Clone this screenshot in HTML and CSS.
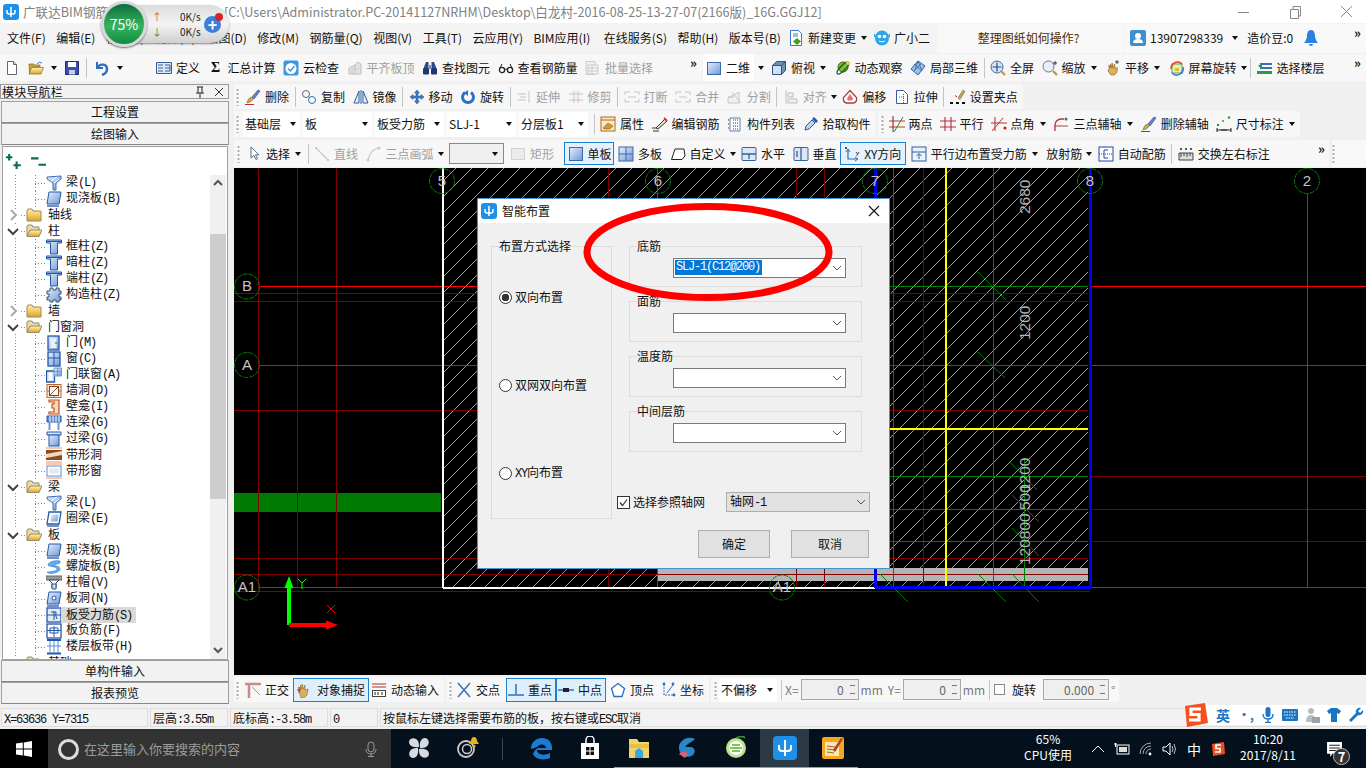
FILE: index.html
```html
<!DOCTYPE html>
<html lang="zh-CN">
<head>
<meta charset="utf-8">
<title>广联达BIM钢筋算量软件</title>
<link rel="stylesheet" href="styles.css">
</head>
<body>
<svg class="sprite" xmlns="http://www.w3.org/2000/svg">
<defs>
<linearGradient id="gb" x1="0" y1="0" x2="1" y2="1"><stop offset="0" stop-color="#e8f0fb"/><stop offset="1" stop-color="#6f97d8"/></linearGradient>
<linearGradient id="gy" x1="0" y1="0" x2="0" y2="1"><stop offset="0" stop-color="#fff2b0"/><stop offset="1" stop-color="#e0a520"/></linearGradient>
<pattern id="hatch" patternUnits="userSpaceOnUse" width="16" height="16"><path d="M-1 17 17 -1" stroke="#c4c4c4" stroke-width=".8"/></pattern>

<symbol id="new" viewBox="0 0 16 16"><path d="M3.5 1.5h6l3 3v10h-9z" fill="#fff" stroke="#666"/><path d="M9.5 1.5v3h3" fill="#ddd" stroke="#666"/></symbol>
<symbol id="open" viewBox="0 0 16 16"><path d="M1 4h5l1 1h5v2H4L1.500 14z" fill="#c9a24a" stroke="#8a6a20" stroke-width=".7"/><path d="M3.500 7.500h12L13 14H1z" fill="url(#gy)" stroke="#8a6a20" stroke-width=".7"/><path d="M9 4q2-3 5-1" fill="none" stroke="#3a7ac8"/></symbol>
<symbol id="save" viewBox="0 0 16 16"><path d="M1.500 1.500h13v13h-13z" fill="#3b4fb0" stroke="#1f2a70"/><path d="M4 2h8v5H4z" fill="#fff"/><path d="M5 10h6v4.500H5z" fill="#c8cce0"/></symbol>
<symbol id="undo" viewBox="0 0 16 16"><path d="M3 2v6h6" fill="none" stroke="#2a6fc0" stroke-width="2"/><path d="M3.500 7.500C6 3 13 4 13 9c0 3-2 5-5 6" fill="none" stroke="#2a6fc0" stroke-width="2.400"/></symbol>
<symbol id="def" viewBox="0 0 16 16"><path d="M.500 2.500h15v11H.500z" fill="#dbe8f8" stroke="#3a5f95"/><path d="M2 5h5M2 8h5M2 11h5M9 5h5v6H9M9 8h5" fill="none" stroke="#3a5f95"/></symbol>
<symbol id="cloud" viewBox="0 0 16 16"><rect x=".5" y=".5" width="15" height="15" rx="2" fill="#3d97e0"/><circle cx="8" cy="8.500" r="5.500" fill="#fff"/><path d="M5 8.500l2.500 2.500 4-5" fill="none" stroke="#3d97e0" stroke-width="1.500"/></symbol>
<symbol id="flush" viewBox="0 0 16 16"><path d="M2 14V8l6-3v9zM8 5l3-3 3 2v10H8" fill="#ddd" stroke="#aaa"/><path d="M5 13V9h7" fill="none" stroke="#bbb"/></symbol>
<symbol id="bino" viewBox="0 0 16 16"><path d="M2 7l2-5h2.500v6H2zM14 7l-2-5H9.500v6H14z" fill="#2b4a8a"/><rect x="1" y="8" width="6" height="6.500" rx="1" fill="#1f3872"/><rect x="9" y="8" width="6" height="6.500" rx="1" fill="#1f3872"/><path d="M7 5h2v4H7z" fill="#7a8eb8"/></symbol>
<symbol id="glass" viewBox="0 0 16 16"><circle cx="4" cy="10" r="2.600" fill="#fff" stroke="#222" stroke-width="1.300"/><circle cx="12" cy="10" r="2.600" fill="#fff" stroke="#222" stroke-width="1.300"/><path d="M6.500 9.500q1.500-1 3 0M1.500 9 4 4M14.500 9 12 4" fill="none" stroke="#222"/></symbol>
<symbol id="batch" viewBox="0 0 16 16"><path d="M1 1.500h9v13H1z" fill="#eee" stroke="#bbb"/><path d="M3 5h10v9H3zM3 8h10M3 11h10M7 5v9" fill="#f4f4f4" stroke="#bbb"/></symbol>
<symbol id="sq" viewBox="0 0 16 16"><rect x="1.500" y="2.500" width="13" height="12" fill="url(#gb)" stroke="#3e66aa"/></symbol>
<symbol id="cube" viewBox="0 0 16 16"><path d="M1.500 5.500h9v9h-9z" fill="#cfe0f5" stroke="#32557f"/><path d="M1.500 5.500l4-4h9l-4 4zM10.500 5.500l4-4v9l-4 4z" fill="#6f8fb8" stroke="#32557f"/></symbol>
<symbol id="orbit" viewBox="0 0 16 16"><circle cx="8" cy="7" r="5" fill="#7fb93a" stroke="#3b6a17"/><ellipse cx="8" cy="8" rx="8" ry="2.500" transform="rotate(-45 8 8)" fill="none" stroke="#1c5c25" stroke-width="1.300"/><circle cx="13" cy="3" r="2" fill="#e8d44a"/></symbol>
<symbol id="local3" viewBox="0 0 16 16"><path d="M8 1l7 5-7 9-7-6z" fill="#9cc0ea" stroke="#2f5f9c"/><path d="M4 4l8 7M8 1l-3 9M12 3l-8 8M8 1l4 10" stroke="#2f5f9c" stroke-width=".8"/></symbol>
<symbol id="full" viewBox="0 0 16 16"><circle cx="7" cy="7" r="6" fill="#d7e4f5" stroke="#4468a0"/><path d="M7 2.500v9M2.500 7h9" stroke="#24508e" stroke-width="1.200"/><path d="M11.500 11.500l3.500 3.500" stroke="#c69a2e" stroke-width="2.200"/></symbol>
<symbol id="zoom" viewBox="0 0 16 16"><circle cx="6.500" cy="6.500" r="5.500" fill="#e8eef8" stroke="#66758f"/><path d="M11 11l4 4" stroke="#c69a2e" stroke-width="2.400"/><path d="M13 1v4M11 3h4" stroke="#335" /></symbol>
<symbol id="hand" viewBox="0 0 16 16"><path d="M4 9V5l1.500 3V4L7 8V3l1.500 5 1-4 .8 5 2-1.500L12 12.500 9 15H6L3 11z" fill="#d9b15c" stroke="#8a6a25" stroke-width=".7"/><path d="M12 0v4M10 2h4" stroke="#345"/></symbol>
<symbol id="scr" viewBox="0 0 16 16"><rect x="3" y="4" width="10" height="9" fill="#dff0b8" stroke="#7a9a40"/><path d="M2 9a6.500 6.500 0 0 1 11-5" fill="none" stroke="#e04030" stroke-width="1.500"/><path d="M14 7a6.500 6.500 0 0 1-11 6" fill="none" stroke="#3080d0" stroke-width="1.500"/><path d="M6 8h4v3H6z" fill="#f2b030"/></symbol>
<symbol id="floor" viewBox="0 0 16 16"><path d="M3 3h12v2H3zM3 7h12v2H3zM3 11h12v2H3z" fill="#3b6fb5"/><path d="M1 6 5 3v6zM0 11h15v3H0z" fill="#2f9a45"/></symbol>
<symbol id="brush" viewBox="0 0 16 16"><path d="M2 14q1-5 4-6l2 2q-1 3-6 4z" fill="#c9b04a" stroke="#776a20" stroke-width=".6"/><path d="M7 8l6-7 2 1-6 8z" fill="#6d7fc8" stroke="#2e3d88" stroke-width=".6"/><path d="M0 15.500h9" stroke="#c23"/></symbol>
<symbol id="copy" viewBox="0 0 16 16"><circle cx="5" cy="5" r="3.500" fill="none" stroke="#667"/><circle cx="11" cy="11" r="3.500" fill="none" stroke="#2a6fc0"/><path d="M7.500 7.500l1 1" stroke="#2a6fc0"/></symbol>
<symbol id="mirror" viewBox="0 0 16 16"><path d="M1 14 6 2v12zM15 14 10 2v12z" fill="#e8f0fb" stroke="#2a5c9c"/><path d="M8 1v14" stroke="#2a5c9c"/></symbol>
<symbol id="move" viewBox="0 0 16 16"><path d="M8 1l2.500 3H9v3h3V5.500L15 8l-3 2.500V9H9v3h1.500L8 15l-2.500-3H7V9H4v1.500L1 8l3-2.500V7h3V4H5.500z" fill="#3f7cc2" stroke="#1f4f8c" stroke-width=".5"/></symbol>
<symbol id="rot" viewBox="0 0 16 16"><path d="M5 3.500a5.500 5.500 0 1 0 6 0" fill="none" stroke="#2a6fc8" stroke-width="3"/><path d="M8 1v6l-4-3z" fill="#2a6fc8"/></symbol>
<symbol id="ext" viewBox="0 0 16 16"><path d="M1 5h9M1 11h9M13 2v12M10 8H4" stroke="#b5b5b5" fill="none"/></symbol>
<symbol id="trim" viewBox="0 0 16 16"><path d="M1 5h14M1 11h14M6 2v12M10 2v12" stroke="#b5b5b5" fill="none"/></symbol>
<symbol id="brk" viewBox="0 0 16 16"><path d="M1 3h5M10 3h5M1 13h5M10 13h5M1 3v3M15 3v3M1 13v-3M15 13v-3M4 8h8" stroke="#b5b5b5" fill="none"/></symbol>
<symbol id="split" viewBox="0 0 16 16"><path d="M1 14V9l11-6v11z" fill="#eee" stroke="#b5b5b5"/><path d="M1 8h6M5 3l9 11" stroke="#b5b5b5"/></symbol>
<symbol id="align" viewBox="0 0 16 16"><path d="M3 1v14M5 4h5v4H5zM5 10h9v4H5z" fill="#eee" stroke="#aaa"/></symbol>
<symbol id="offs" viewBox="0 0 16 16"><path d="M8 1.500l6.500 7c.5 3-1 5-3 5.500H4.500c-2-.5-3.500-2.500-3-5.500z" fill="#fff" stroke="#a04040" stroke-width="1.300"/><path d="M8 5l3 4.500c0 1.500-1 2-2 2H7c-1 0-2-.5-2-2z" fill="#e07070"/></symbol>
<symbol id="stretch" viewBox="0 0 16 16"><path d="M2.500 1.500h7l4 4v9h-11z" fill="#fff" stroke="#2f5c9c"/><path d="M9.500 5v9M5 8h5" stroke="#2f5c9c" stroke-dasharray="1 1"/></symbol>
<symbol id="gripi" viewBox="0 0 16 16"><path d="M8 9l5-8 2 1.500-5 8z" fill="#c9a050" stroke="#774" stroke-width=".6"/><path d="M5 7q1-1 2 1" stroke="#c23" fill="none"/><path d="M0 14h3M6 14h3M12 14h3" stroke="#111" stroke-width="2"/></symbol>
<symbol id="attr" viewBox="0 0 16 16"><rect x="1" y="1" width="14" height="14" fill="#fbe9c4" stroke="#b36a18"/><path d="M1 4h14" stroke="#b36a18"/><path d="M3 12l5-5 5 3-3 3H4z" fill="#d69a20" stroke="#555" stroke-width=".5"/></symbol>
<symbol id="edit" viewBox="0 0 16 16"><path d="M0 12h4M4 12l9-9 2 2-9 8z" fill="#e9e4c8" stroke="#333"/><path d="M12 2l3 3" stroke="#c33" stroke-width="2"/><path d="M1 15h6" stroke="#333"/></symbol>
<symbol id="list" viewBox="0 0 16 16"><path d="M3 2h10v13H3z" fill="#fff" stroke="#5f7fa8"/><path d="M1 4h2M1 8h2M1 12h2M6 4h5M6 7h5M6 10h5M6 13h5" stroke="#334" stroke-dasharray="1 1"/></symbol>
<symbol id="pick" viewBox="0 0 16 16"><path d="M2 14l1-4 6-6 3 3-6 6z" fill="#bcd7f4" stroke="#2358a8"/><path d="M9 3l2-2 4 4-2 2z" fill="#2358a8"/></symbol>
<symbol id="two" viewBox="0 0 16 16"><path d="M0 5h16M0 11h16" stroke="#c0392b"/><path d="M5 16 14 1" stroke="#1f8a3a"/><path d="M4 0v16" stroke="#7a2020"/></symbol>
<symbol id="para" viewBox="0 0 16 16"><path d="M0 5h16M0 11h16M5 1v14M11 1v14" stroke="#b82c3c" stroke-width="1.100"/></symbol>
<symbol id="ang" viewBox="0 0 16 16"><path d="M0 7h16M4 1v14M1 15 12 2" stroke="#b03030"/><circle cx="14" cy="12" r="1.600" fill="#d01c1c"/></symbol>
<symbol id="arc" viewBox="0 0 16 16"><path d="M1 15V9a6 6 0 0 1 6-6h3" fill="none" stroke="#c03030" stroke-width="1.300"/><path d="M0 10h14" stroke="#b04040"/><circle cx="12" cy="3" r="1.500" fill="#2a8a40"/></symbol>
<symbol id="dim" viewBox="0 0 16 16"><path d="M1 12v4M15 12v4M1 14h14M5 14h6" stroke="#222"/><circle cx="2" cy="9" r="1.200" fill="#2a9a40"/><circle cx="13" cy="1.500" r="1.200" fill="#2a9a40"/><circle cx="7" cy="5" r="1" fill="#2a9a40"/></symbol>
<symbol id="ptr" viewBox="0 0 16 16"><path d="M5 1v11l3-2.500 2 4 1.500-.7-2-4h3.500z" fill="#fff" stroke="#5a6f8a"/></symbol>
<symbol id="line" viewBox="0 0 16 16"><path d="M2 2l12 12" stroke="#bbb" stroke-width="1.200"/><path d="M1 1h2v2H1zM13 13h2v2h-2z" fill="#bbb"/></symbol>
<symbol id="arc3" viewBox="0 0 16 16"><path d="M2 15Q3 5 12 2" fill="none" stroke="#bbb" stroke-width="1.300"/><circle cx="13" cy="2" r="1.500" fill="#bbb"/><circle cx="2" cy="14" r="1.500" fill="#bbb"/></symbol>
<symbol id="rect" viewBox="0 0 16 16"><rect x="1.500" y="2.500" width="13" height="11" fill="#e8e8e8" stroke="#c8c8c8"/></symbol>
<symbol id="one" viewBox="0 0 16 16"><rect x="1.500" y="1.500" width="13" height="13" fill="url(#gb)" stroke="#3e66aa"/></symbol>
<symbol id="multi" viewBox="0 0 16 16"><rect x="1" y="1" width="14" height="14" fill="url(#gb)" stroke="#3e66aa"/><path d="M8 1v14M1 8h14" stroke="#3e66aa"/></symbol>
<symbol id="cust" viewBox="0 0 16 16"><path d="M1.500 13.500 5 3h9l1 7-3 3.500z" fill="#fff" stroke="#222"/></symbol>
<symbol id="horiz" viewBox="0 0 16 16"><rect x="1" y="1.500" width="14" height="13" rx="1" fill="#dbe7f6" stroke="#3a5f95"/><path d="M1 8h14M8 8v5" stroke="#3a5f95" stroke-width="1.300"/></symbol>
<symbol id="vert" viewBox="0 0 16 16"><rect x="1" y="1.500" width="14" height="13" rx="1" fill="#dbe7f6" stroke="#3a5f95"/><path d="M8 1.500v13M4 5v6" stroke="#3a5f95" stroke-width="1.300"/></symbol>
<symbol id="xy" viewBox="0 0 16 16"><path d="M4 4v9h9" fill="none" stroke="#2a6fc0" stroke-width="1.200"/><path d="M2 6l2-3 2 3M11 11l3 2-3 2" fill="none" stroke="#2a6fc0"/><path d="M1 1l2 2M3 1 1 3M12 6l1.500 2M15 6l-2.500 4" stroke="#222" stroke-width=".8"/></symbol>
<symbol id="pedge" viewBox="0 0 16 16"><rect x="1" y="1" width="14" height="14" fill="#e8f2fc" stroke="#2f5c9c"/><path d="M1 6h14M8 8v5M5.500 10 8 7.500l2.500 2.500" fill="none" stroke="#2f5c9c"/></symbol>
<symbol id="auto" viewBox="0 0 16 16"><rect x="1" y="1" width="14" height="14" fill="#fff" stroke="#2446b0"/><path d="M1 8h14" stroke="#2446b0" stroke-dasharray="1 1"/><path d="M6 4h4M6 4v8h4" fill="none" stroke="#2446b0"/></symbol>
<symbol id="swap" viewBox="0 0 16 16"><path d="M1 7h14v7H1z" fill="#ddd" stroke="#444"/><path d="M3 7v4M6 7v3M9 7v4M12 7v3" stroke="#444"/><path d="M2 3h2M7 3h2M12 3h2" stroke="#222" stroke-width="1.500"/></symbol>
<symbol id="ortho" viewBox="0 0 16 16"><path d="M0 2h16M4 2v14" stroke="#c78c8c" stroke-width="2.500"/><path d="M7 5l8 8" stroke="#a99" /></symbol>
<symbol id="snap" viewBox="0 0 16 16"><path d="M2 9V5l1.500 3V3L5 7V2l1.500 5L8 3v5l3-1-1 6-3 3H4z" fill="#d9b15c" stroke="#8a6a25" stroke-width=".6"/><path d="M0 8h4M2 5v6" stroke="#c03030"/></symbol>
<symbol id="dyn" viewBox="0 0 16 16"><path d="M1 2h14M1 5h14" stroke="#a33"/><rect x="1.500" y="8.500" width="13" height="6" fill="#fff" stroke="#444"/><path d="M4 10v3M7 10v3M11 10v3" stroke="#222"/></symbol>
<symbol id="cross" viewBox="0 0 16 16"><path d="M2 1l12 14M14 1 2 15" stroke="#3a6fb8" stroke-width="1.500"/></symbol>
<symbol id="perp" viewBox="0 0 16 16"><path d="M0 13h16" stroke="#2a6fc0" stroke-width="1.500"/><path d="M8 2v10" stroke="#2a6fc0" stroke-width="1.500"/></symbol>
<symbol id="mid" viewBox="0 0 16 16"><path d="M0 8h16" stroke="#2a6fc0" stroke-width="1.500"/><rect x="5" y="6" width="6" height="4" fill="#223"/></symbol>
<symbol id="vtx" viewBox="0 0 16 16"><path d="M8 1.500l6.500 5-2.500 8H4l-2.500-8z" fill="#fff" stroke="#2a6fc0" stroke-width="1.300"/></symbol>
<symbol id="coord" viewBox="0 0 16 16"><path d="M4 2v11h11" fill="none" stroke="#2a6fc0" stroke-dasharray="2 1"/><path d="M7 11l6-8" stroke="#2a6fc0"/><circle cx="13" cy="2" r="1.400" fill="#2a6fc0"/><circle cx="4" cy="2" r="1.400" fill="#2a6fc0"/><circle cx="14" cy="13" r="1.400" fill="#2a6fc0"/></symbol>
<symbol id="change" viewBox="0 0 16 16"><path d="M2.500.5h8l3 3v12h-11z" fill="#fff" stroke="#3a7ac8"/><path d="M5 4h5M5 6h5" stroke="#3a7ac8"/><path d="M9 8l4 3.500L9 15l-4-3.500z" fill="#4a9a2a"/></symbol>
<symbol id="mascot" viewBox="0 0 16 16"><ellipse cx="8" cy="8" rx="7" ry="7.500" fill="#2ba6ea"/><path d="M1 7 0 4M15 7l1-3" stroke="#2ba6ea" stroke-width="2"/><circle cx="5.500" cy="6.500" r="1.800" fill="#fff"/><circle cx="10.500" cy="6.500" r="1.800" fill="#fff"/><path d="M5 11q3 2 6 0" fill="none" stroke="#fff"/></symbol>
<symbol id="user" viewBox="0 0 16 16"><rect width="16" height="16" rx="2" fill="#3d8fd0"/><circle cx="8" cy="6" r="3" fill="#fff"/><path d="M3 13q0-4 5-4t5 4z" fill="#fff"/></symbol>
<symbol id="bell" viewBox="0 0 16 16"><path d="M8 0c3 0 4 3 4 6 0 3 2 6 3 7H1c1-1 3-4 3-7 0-3 1-6 4-6z" fill="#2b7fe0"/><path d="M6 14h4a2 2 0 0 1-4 0z" fill="#2b7fe0"/></symbol>

<symbol id="fclosed" viewBox="0 0 16 16"><path d="M1 4l1-2h4l1 2h8v10H1z" fill="url(#gy)" stroke="#9a8860"/></symbol>
<symbol id="fopen" viewBox="0 0 16 16"><path d="M1 13V3l1-1h4l1 2h6v3" fill="#e7dcb8" stroke="#9a8860"/><path d="M1 13.500 4 7h12l-3 6.500z" fill="url(#gy)" stroke="#9a8860"/></symbol>
<symbol id="tbeam" viewBox="0 0 16 16"><path d="M1 2l14-1v3L10 8v7H7V8L1 4z" fill="url(#gb)" stroke="#3a6fb8"/><path d="M5 6l6-4M8 8l5-4" stroke="#fff"/></symbol>
<symbol id="tslab" viewBox="0 0 16 16"><path d="M3 1h12l-2 12H1z" fill="url(#gb)" stroke="#2357a8"/><path d="M1 15h12" stroke="#2357a8" stroke-width="1.300"/></symbol>
<symbol id="tcol" viewBox="0 0 16 16"><path d="M.5 1h15v3h-4v11h-7V4h-4z" fill="url(#gb)" stroke="#2357a8"/><path d="M1 2.500h14" stroke="#2357a8"/></symbol>
<symbol id="tgz" viewBox="0 0 16 16"><path d="M4 1h3v2h3V1h3v3h2v3h-2v3h2v3h-2v2h-3v-2H7v2H4v-2H1v-3h2V7H1V4h3z" fill="url(#gb)" stroke="#33506f"/></symbol>
<symbol id="tdoor" viewBox="0 0 16 16"><rect x="2" y="1" width="11" height="14" fill="url(#gb)" stroke="#2357a8" stroke-width="1.300"/><rect x="4.500" y="3" width="6" height="10" fill="#e8f0fb"/><circle cx="10" cy="8" r=".8" fill="#234"/></symbol>
<symbol id="twin" viewBox="0 0 16 16"><rect x="2" y="1" width="12" height="14" fill="url(#gb)" stroke="#2357a8" stroke-width="1.300"/><path d="M8 1v14M2 7h12" stroke="#2357a8"/></symbol>
<symbol id="tdw" viewBox="0 0 16 16"><path d="M.5 4h8v11h-8z" fill="#dfe9f8" stroke="#2357a8" stroke-width="1.300"/><path d="M3 6h3v7H3z" fill="#fff"/><path d="M8 1h7.500v8H8z" fill="url(#gb)" stroke="#6f97d8"/><path d="M11.500 1v8M8 4.500h7.500" stroke="#6f97d8"/></symbol>
<symbol id="thole" viewBox="0 0 16 16"><rect x="1" y="1.500" width="14" height="13" fill="#fbe8d5" stroke="#c0652a"/><rect x="3.500" y="3.500" width="9" height="9" fill="#fff" stroke="#7a4a25"/><path d="M4 12l8-8" stroke="#7a4a25"/><path d="M8 1v2M8 13v2M1 8h2M13 8h2" stroke="#c0652a"/></symbol>
<symbol id="tniche" viewBox="0 0 16 16"><path d="M3 1h10v14H3v-2h5V9H6V5h2V3H3z" fill="#f5d9b8" stroke="#c0521c" stroke-width="1.200"/></symbol>
<symbol id="tlink" viewBox="0 0 16 16"><path d="M1 1h14v6H1z" fill="#5d8ed6" stroke="#2357a8"/><path d="M4 1v6M7 1v6M10 1v6M13 1v6" stroke="#fff"/><path d="M3.500 7v8M12.500 7v8" stroke="#6f97d8" stroke-width="2"/></symbol>
<symbol id="tgl" viewBox="0 0 16 16"><path d="M1 1h14v3H1z" fill="#dfe9f8" stroke="#2357a8"/><rect x="3" y="4" width="10" height="11" fill="url(#gb)" stroke="#2357a8"/></symbol>
<symbol id="tband" viewBox="0 0 16 16"><rect x="0" y="3" width="16" height="10" fill="#8a4a20"/><path d="M0 7l16-3v4L0 11z" fill="#f0d8c0"/><path d="M0 1h16M0 15h16" stroke="#f5c8b0" stroke-width="2"/></symbol>
<symbol id="tbandw" viewBox="0 0 16 16"><path d="M0 1h16M0 15h16" stroke="#f5c8b0" stroke-width="2"/><rect x="1" y="3" width="14" height="10" fill="#fff" stroke="#5d8ed6"/><rect x="3" y="5.500" width="10" height="5" fill="#dfe9f8"/></symbol>
<symbol id="tring" viewBox="0 0 16 16"><path d="M3 1h12l-2 12H1z" fill="#fff" stroke="#2357a8" stroke-width="1.300"/><path d="M5.500 3.500h7l-1 7h-7z" fill="url(#gb)"/><path d="M1 15h12" stroke="#2357a8" stroke-width="1.300"/></symbol>
<symbol id="tspiral" viewBox="0 0 16 16"><path d="M14 2C9 1 2 3 2 6c0 2 9 1 9 4 0 2-6 3-10 3 1 2 8 2 12-1 3-3-1-6-7-5 3-2 6-2 8-3z" fill="#62b0ee" stroke="#2a74c8" stroke-width=".6"/></symbol>
<symbol id="tcap" viewBox="0 0 16 16"><path d="M0 1h16v4H0z" fill="#999" stroke="#666"/><path d="M3 5h10l-3 3v5H6V8z" fill="#fff" stroke="#445"/><path d="M6 9h4v5H6z" fill="#cde" stroke="#2357a8"/></symbol>
<symbol id="thslab" viewBox="0 0 16 16"><path d="M3 1h12l-2 12H1z" fill="url(#gb)" stroke="#2357a8"/><circle cx="8" cy="7" r="2" fill="#fff" stroke="#2357a8"/><path d="M1 15h12" stroke="#2357a8" stroke-width="1.300"/></symbol>
<symbol id="tbar" viewBox="0 0 16 16"><rect x="1" y="1" width="14" height="14" fill="#dfe9f8" stroke="#2357a8" stroke-width="1.300"/><path d="M1 8h14M8 4v9M5 5h5q-1 4 1 7" fill="none" stroke="#2357a8"/></symbol>
<symbol id="tneg" viewBox="0 0 16 16"><rect x="1" y="1" width="14" height="14" fill="#fff" stroke="#2357a8" stroke-width="1.300"/><path d="M4 5h8v5H4zM8 3v11M1 7.500h14" fill="none" stroke="#2357a8"/></symbol>
<symbol id="tstrip" viewBox="0 0 16 16"><path d="M1 1h14M1 14.500h14" stroke="#2357a8" stroke-width="2"/><path d="M4 2v12M8 2v12M12 2v12M1 7h14" stroke="#5d8ed6"/></symbol>
</defs>
</svg>

<div class="title">
  <svg class="logo" viewBox="0 0 16 16"><rect width="16" height="16" rx="3" fill="#1e90e8"/><path d="M8 3v10M4 6v2a2 2 0 0 0 2 2h4a2 2 0 0 0 2-2V6" fill="none" stroke="#fff" stroke-width="1.500"/></svg>
  <span class="title-a">广联达BIM钢筋算量软件</span>
  <span class="title-b">[C:\Users\Administrator.PC-20141127NRHM\Desktop\白龙村-2016-08-25-13-27-07(2166版)_16G.GGJ12]</span>
  <div class="winbtns">
    <svg viewBox="0 0 16 16"><path d="M2 8.500h11" stroke="#888"/></svg>
    <svg viewBox="0 0 16 16"><path d="M3.500 5.500h8v9h-8zM6 5V2.500h7.500V12H12" fill="none" stroke="#888"/></svg>
    <svg viewBox="0 0 16 16"><path d="M3 2l11 11M14 2 3 13" stroke="#888"/></svg>
  </div>
</div>

<div class="menubar">
  <nav class="menus">
    <span>文件(F)</span><span>编辑(E)</span><span>楼层(L)</span><span>构件(N)</span><span>绘图(D)</span><span>修改(M)</span><span>钢筋量(Q)</span><span>视图(V)</span><span>工具(T)</span><span>云应用(Y)</span><span>BIM应用(I)</span><span>在线服务(S)</span><span>帮助(H)</span><span>版本号(B)</span>
  </nav>
  <div class="tool m-new"><svg class="ic"><use href="#change"/></svg><span>新建变更</span><b class="dd"></b></div>
  <div class="tool m-gx"><svg class="ic"><use href="#mascot"/></svg><span>广小二</span></div>
  <div class="tip">整理图纸如何操作?</div>
  <div class="account">
    <svg class="ic"><use href="#user"/></svg><span>13907298339</span><b class="dd"></b><span class="bean">造价豆:0</span><svg class="ic bellic"><use href="#bell"/></svg><em class="more">»</em>
  </div>
</div>

<div class="toolrow">
  <div class="group g1">
    <svg class="ic"><use href="#new"/></svg><svg class="ic"><use href="#open"/></svg><b class="dd solo"></b><svg class="ic"><use href="#save"/></svg><i class="sep"></i><svg class="ic"><use href="#undo"/></svg><b class="dd solo"></b><em class="more">»</em>
  </div>
  <div class="group g2 tools">
    <div class="tool"><svg class="ic"><use href="#def"/></svg><span>定义</span></div>
    <div class="tool"><span class="sigma">Σ</span><span>汇总计算</span></div>
    <div class="tool"><svg class="ic"><use href="#cloud"/></svg><span>云检查</span></div>
    <div class="tool off"><svg class="ic"><use href="#flush"/></svg><span>平齐板顶</span></div>
    <div class="tool"><svg class="ic"><use href="#bino"/></svg><span>查找图元</span></div>
    <div class="tool"><svg class="ic"><use href="#glass"/></svg><span>查看钢筋量</span></div>
    <div class="tool off"><svg class="ic"><use href="#batch"/></svg><span>批量选择</span></div>
    <em class="more g2-more">»</em>
  </div>
  <div class="group g3 tools">
    <div class="tool lit"><svg class="ic"><use href="#sq"/></svg><span>二维</span></div><b class="dd solo ddlit"></b>
    <div class="tool"><svg class="ic"><use href="#cube"/></svg><span>俯视</span><b class="dd"></b></div>
    <div class="tool"><svg class="ic"><use href="#orbit"/></svg><span>动态观察</span></div>
    <div class="tool"><svg class="ic"><use href="#local3"/></svg><span>局部三维</span></div>
    <i class="sep"></i>
    <div class="tool"><svg class="ic"><use href="#full"/></svg><span>全屏</span></div>
    <div class="tool"><svg class="ic"><use href="#zoom"/></svg><span>缩放</span><b class="dd"></b></div>
    <div class="tool"><svg class="ic"><use href="#hand"/></svg><span>平移</span><b class="dd"></b></div>
    <div class="tool"><svg class="ic"><use href="#scr"/></svg><span>屏幕旋转</span><b class="dd tight"></b></div>
    <i class="sep"></i>
    <div class="tool"><svg class="ic"><use href="#floor"/></svg><span>选择楼层</span></div>
    <em class="more end">»</em>
  </div>
</div>

<div class="main">
  <aside class="nav">
    <div class="navhead"><span>模块导航栏</span><span class="navbtns"><svg viewBox="0 0 12 12"><path d="M3 1h6M4 1v6M8 1v6M2 7h8M6 7v5" stroke="#222" fill="none"/></svg><svg viewBox="0 0 12 12"><path d="M2 2l8 8M10 2l-8 8" stroke="#333"/></svg></span></div>
    <div class="navbtn">工程设置</div>
    <div class="navbtn">绘图输入</div>
    <div class="treebox">
      <div class="treetools">
        <svg viewBox="0 0 16 16"><path d="M3 1v6M0 4h6M10 8v7M7 11.500h7" stroke="#0a6a5a" stroke-width="2"/></svg>
        <svg viewBox="0 0 16 16"><path d="M1 5h7M8 11h7" stroke="#0a6a5a" stroke-width="2"/></svg>
      </div>
      <div class="treewrap">
        <div class="tree">
          <div class="row c"><svg class="ic"><use href="#tbeam"/></svg><span>梁<i class="m">(L)</i></span></div>
          <div class="row c"><svg class="ic"><use href="#tslab"/></svg><span>现浇板<i class="m">(B)</i></span></div>
          <div class="row f"><svg class="chev" viewBox="0 0 12 12"><path d="M4 1l5 5-5 5" fill="none" stroke="#aaa" stroke-width="2"/></svg><svg class="ic"><use href="#fclosed"/></svg><span>轴线</span></div>
          <div class="row f"><svg class="chev" viewBox="0 0 12 12"><path d="M1 4l5 5 5-5" fill="none" stroke="#444" stroke-width="2"/></svg><svg class="ic"><use href="#fopen"/></svg><span>柱</span></div>
          <div class="row c"><svg class="ic"><use href="#tcol"/></svg><span>框柱<i class="m">(Z)</i></span></div>
          <div class="row c"><svg class="ic"><use href="#tcol"/></svg><span>暗柱<i class="m">(Z)</i></span></div>
          <div class="row c"><svg class="ic"><use href="#tcol"/></svg><span>端柱<i class="m">(Z)</i></span></div>
          <div class="row c"><svg class="ic"><use href="#tgz"/></svg><span>构造柱<i class="m">(Z)</i></span></div>
          <div class="row f"><svg class="chev" viewBox="0 0 12 12"><path d="M4 1l5 5-5 5" fill="none" stroke="#aaa" stroke-width="2"/></svg><svg class="ic"><use href="#fclosed"/></svg><span>墙</span></div>
          <div class="row f"><svg class="chev" viewBox="0 0 12 12"><path d="M1 4l5 5 5-5" fill="none" stroke="#444" stroke-width="2"/></svg><svg class="ic"><use href="#fopen"/></svg><span>门窗洞</span></div>
          <div class="row c"><svg class="ic"><use href="#tdoor"/></svg><span>门<i class="m">(M)</i></span></div>
          <div class="row c"><svg class="ic"><use href="#twin"/></svg><span>窗<i class="m">(C)</i></span></div>
          <div class="row c"><svg class="ic"><use href="#tdw"/></svg><span>门联窗<i class="m">(A)</i></span></div>
          <div class="row c"><svg class="ic"><use href="#thole"/></svg><span>墙洞<i class="m">(D)</i></span></div>
          <div class="row c"><svg class="ic"><use href="#tniche"/></svg><span>壁龛<i class="m">(I)</i></span></div>
          <div class="row c"><svg class="ic"><use href="#tlink"/></svg><span>连梁<i class="m">(G)</i></span></div>
          <div class="row c"><svg class="ic"><use href="#tgl"/></svg><span>过梁<i class="m">(G)</i></span></div>
          <div class="row c"><svg class="ic"><use href="#tband"/></svg><span>带形洞</span></div>
          <div class="row c"><svg class="ic"><use href="#tbandw"/></svg><span>带形窗</span></div>
          <div class="row f"><svg class="chev" viewBox="0 0 12 12"><path d="M1 4l5 5 5-5" fill="none" stroke="#444" stroke-width="2"/></svg><svg class="ic"><use href="#fopen"/></svg><span>梁</span></div>
          <div class="row c"><svg class="ic"><use href="#tbeam"/></svg><span>梁<i class="m">(L)</i></span></div>
          <div class="row c"><svg class="ic"><use href="#tring"/></svg><span>圈梁<i class="m">(E)</i></span></div>
          <div class="row f"><svg class="chev" viewBox="0 0 12 12"><path d="M1 4l5 5 5-5" fill="none" stroke="#444" stroke-width="2"/></svg><svg class="ic"><use href="#fopen"/></svg><span>板</span></div>
          <div class="row c"><svg class="ic"><use href="#tslab"/></svg><span>现浇板<i class="m">(B)</i></span></div>
          <div class="row c"><svg class="ic"><use href="#tspiral"/></svg><span>螺旋板<i class="m">(B)</i></span></div>
          <div class="row c"><svg class="ic"><use href="#tcap"/></svg><span>柱帽<i class="m">(V)</i></span></div>
          <div class="row c"><svg class="ic"><use href="#thslab"/></svg><span>板洞<i class="m">(N)</i></span></div>
          <div class="row c sel"><svg class="ic"><use href="#tbar"/></svg><span>板受力筋<i class="m">(S)</i></span></div>
          <div class="row c"><svg class="ic"><use href="#tneg"/></svg><span>板负筋<i class="m">(F)</i></span></div>
          <div class="row c"><svg class="ic"><use href="#tstrip"/></svg><span>楼层板带<i class="m">(H)</i></span></div>
          <div class="row f"><svg class="chev" viewBox="0 0 12 12"><path d="M1 4l5 5 5-5" fill="none" stroke="#444" stroke-width="2"/></svg><svg class="ic"><use href="#fopen"/></svg><span>基础</span></div>
        </div>
        <div class="scroll">
          <svg viewBox="0 0 16 16"><path d="M4 10l4-4 4 4" fill="none" stroke="#555" stroke-width="2"/></svg>
          <div class="track"><div class="thumb"></div></div>
          <svg viewBox="0 0 16 16"><path d="M4 6l4 4 4-4" fill="none" stroke="#555" stroke-width="2"/></svg>
        </div>
      </div>
    </div>
    <div class="navbtn">单构件输入</div>
    <div class="navbtn">报表预览</div>
  </aside>

  <section class="work">
    <div class="rows r2">
      <div class="group tools">
        <i class="grip"></i>
        <div class="tool"><svg class="ic"><use href="#brush"/></svg><span>删除</span></div><i class="sep"></i>
        <div class="tool"><svg class="ic"><use href="#copy"/></svg><span>复制</span></div>
        <div class="tool"><svg class="ic"><use href="#mirror"/></svg><span>镜像</span></div><i class="sep"></i>
        <div class="tool"><svg class="ic"><use href="#move"/></svg><span>移动</span></div>
        <div class="tool"><svg class="ic"><use href="#rot"/></svg><span>旋转</span></div><i class="sep"></i>
        <div class="tool off"><svg class="ic"><use href="#ext"/></svg><span>延伸</span></div>
        <div class="tool off"><svg class="ic"><use href="#trim"/></svg><span>修剪</span></div><i class="sep"></i>
        <div class="tool off"><svg class="ic"><use href="#brk"/></svg><span>打断</span></div>
        <div class="tool off"><svg class="ic"><use href="#brk"/></svg><span>合并</span></div>
        <div class="tool off"><svg class="ic"><use href="#split"/></svg><span>分割</span></div><i class="sep"></i>
        <div class="tool off"><svg class="ic"><use href="#align"/></svg><span>对齐</span><b class="dd tight"></b></div>
        <div class="tool"><svg class="ic"><use href="#offs"/></svg><span>偏移</span></div>
        <div class="tool"><svg class="ic"><use href="#stretch"/></svg><span>拉伸</span></div><i class="sep"></i>
        <div class="tool"><svg class="ic"><use href="#gripi"/></svg><span>设置夹点</span></div>
      </div>
    </div>
    <div class="rows r3">
      <div class="group tools">
        <i class="grip"></i>
        <div class="combos">
          <div class="tcombo first"><span>基础层</span><b class="dd"></b></div>
          <div class="tcombo"><span>板</span><b class="dd"></b></div>
          <div class="tcombo"><span>板受力筋</span><b class="dd"></b></div>
          <div class="tcombo"><span>SLJ-1</span><b class="dd"></b></div>
          <div class="tcombo"><span>分层板1</span><b class="dd"></b></div>
        </div>
        <i class="sep"></i>
        <div class="tool"><svg class="ic"><use href="#attr"/></svg><span>属性</span></div>
        <div class="tool"><svg class="ic"><use href="#edit"/></svg><span>编辑钢筋</span></div>
        <div class="tool"><svg class="ic"><use href="#list"/></svg><span>构件列表</span></div>
        <div class="tool"><svg class="ic"><use href="#pick"/></svg><span>拾取构件</span></div>
      </div>
      <div class="group tools g-axis">
        <i class="grip"></i>
        <div class="tool"><svg class="ic"><use href="#two"/></svg><span>两点</span></div>
        <div class="tool"><svg class="ic"><use href="#para"/></svg><span>平行</span></div>
        <div class="tool"><svg class="ic"><use href="#ang"/></svg><span>点角</span><b class="dd"></b></div>
        <div class="tool"><svg class="ic"><use href="#arc"/></svg><span>三点辅轴</span><b class="dd"></b></div>
        <div class="tool"><svg class="ic"><use href="#brush"/></svg><span>删除辅轴</span></div>
        <div class="tool"><svg class="ic"><use href="#dim"/></svg><span>尺寸标注</span><b class="dd"></b></div>
      </div>
    </div>
    <div class="rows r4">
      <div class="group tools wide">
        <i class="grip"></i>
        <div class="tool"><svg class="ic"><use href="#ptr"/></svg><span>选择</span><b class="dd"></b></div><i class="sep"></i>
        <div class="tool off"><svg class="ic"><use href="#line"/></svg><span>直线</span></div>
        <div class="tool off"><svg class="ic"><use href="#arc3"/></svg><span>三点画弧</span><b class="dd tight"></b></div>
        <div class="blank"><b class="dd"></b></div>
        <div class="tool off"><svg class="ic"><use href="#rect"/></svg><span>矩形</span></div>
        <div class="tool on b-one"><svg class="ic"><use href="#one"/></svg><span>单板</span></div>
        <div class="tool"><svg class="ic"><use href="#multi"/></svg><span>多板</span></div>
        <div class="tool"><svg class="ic"><use href="#cust"/></svg><span>自定义</span><b class="dd tight"></b></div>
        <div class="tool"><svg class="ic"><use href="#horiz"/></svg><span>水平</span></div>
        <div class="tool"><svg class="ic"><use href="#vert"/></svg><span>垂直</span></div>
        <div class="tool on b-xy"><svg class="ic"><use href="#xy"/></svg><span>XY方向</span></div>
        <div class="tool"><svg class="ic"><use href="#pedge"/></svg><span>平行边布置受力筋</span><b class="dd"></b></div>
        <div class="tool"><span>放射筋</span><b class="dd tight"></b></div>
        <div class="tool"><svg class="ic"><use href="#auto"/></svg><span>自动配筋</span></div><i class="sep"></i>
        <div class="tool"><svg class="ic"><use href="#swap"/></svg><span>交换左右标注</span></div>
        <em class="more r4-more">»</em>
      </div>
      <div class="griptail"><i class="grip"></i></div>
    </div>

    <svg class="canvas" viewBox="234 168 1132 507" xmlns="http://www.w3.org/2000/svg" shape-rendering="crispEdges">
      <rect x="234" y="168" width="1132" height="507" fill="#000"/>
      <rect x="443" y="168" width="645" height="419" fill="url(#hatch)" shape-rendering="auto"/>
      <rect x="234" y="493" width="207" height="19" fill="#007a00"/>
      <rect x="658" y="568" width="430" height="13" fill="#b4b4b4"/>
      <g stroke="#800000" fill="none">
        <path d="M258.500 168v420M297.500 168v420M336.500 168v420M608.500 168v420M796.500 168v420M824.500 168v420M923.500 168v420"/>
        <path d="M234 293.500h854M234 301.500h854M234 410.500h854M234 558.500h854M234 574.500h854M234 591.500h856"/>
        <path d="M1091 476.500h275M1091 509.500h275M1091 541.500h275"/>
      </g>
      <g stroke="#f00" fill="none">
        <path d="M260 286.500h628M260 365.500h628M1091 286.500h275M1091 365.500h275M1091 587.500h275M258 587.500h538"/>
        <path d="M657.500 168v419M1307.500 194v393"/>
      </g>
      <g stroke="#008000" fill="none">
        <path d="M893.500 168v420M993.500 168v420M1024.500 458v130"/>
        <path d="M888 286.500h200M888 365.500h200M888 476.500h200M888 509.500h200M888 541.500h200M796 587.500h80"/>
      </g>
      <g stroke="#008000" fill="none" shape-rendering="auto">
        <path d="M978 272l28 28M978 352l27 26M1010 462l27 28M1012 495l27 27M1012 528l27 28M978 574l28 28M1012 574l27 28M880 574l28 28"/>
      </g>
      <path d="M443 168v420M443 588h432" stroke="#fff" stroke-width="1.500" fill="none"/>
      <path d="M946 168v418M890 429h198" stroke="#ff0" stroke-width="2" fill="none"/>
      <path d="M875 168v420M1090 168v421M875 587.500h215" stroke="#0000f0" stroke-width="3" fill="none"/>
      <g fill="none" stroke="#008000" stroke-dasharray="5 1" shape-rendering="auto">
        <circle cx="442" cy="181" r="12.500"/><circle cx="658" cy="181" r="12.500"/><circle cx="875" cy="181" r="12.500"/><circle cx="1090" cy="181" r="12.500"/><circle cx="1307" cy="181" r="12.500"/>
        <circle cx="247" cy="286.500" r="12.500"/><circle cx="247" cy="365" r="12.500"/><circle cx="247" cy="587.500" r="12.500"/><circle cx="782" cy="587.500" r="12.500"/>
      </g>
      <g class="axlabel" text-anchor="middle">
        <text x="442" y="186">5</text><text x="658" y="186">6</text><text x="875" y="186">7</text><text x="1090" y="186">8</text><text x="1307" y="186">2</text>
        <text x="247" y="291">B</text><text x="247" y="370">A</text><text x="247" y="592">A1</text><text x="782" y="592">A1</text>
      </g>
      <g class="dim">
        <text transform="translate(1030 214) rotate(-90)">2680</text>
        <text transform="translate(1030 340) rotate(-90)">1200</text>
        <text transform="translate(1030 565) rotate(-90)">120800</text>
        <text transform="translate(1030 510) rotate(-90)">500</text>
        <text transform="translate(1030 492) rotate(-90)">1200</text>
      </g>
      <g shape-rendering="auto">
        <path d="M289 625v-40" stroke="#0f0" stroke-width="4"/><path d="M289 576l4.500 12h-9z" fill="#0f0"/>
        <path d="M289 625h38" stroke="#f00" stroke-width="4"/><path d="M338 625l-12-4.500v9z" fill="#f00"/>
        <path d="M298 579l4 4 4-4M302 583v6" stroke="#0f0" fill="none"/>
        <path d="M327 605l8 8M335 605l-8 8" stroke="#f00" fill="none"/>
      </g>
    </svg>

    <div class="bottombar">
      <div class="group tools bb1">
        <i class="grip"></i>
        <div class="tool"><svg class="ic"><use href="#ortho"/></svg><span>正交</span></div>
        <div class="tool on b-snap"><svg class="ic"><use href="#snap"/></svg><span>对象捕捉</span></div>
        <div class="tool"><svg class="ic"><use href="#dyn"/></svg><span>动态输入</span></div>
      </div>
      <div class="group tools bb2">
        <i class="grip"></i>
        <div class="tool"><svg class="ic"><use href="#cross"/></svg><span>交点</span></div>
        <div class="pair">
          <div class="tool on"><svg class="ic"><use href="#perp"/></svg><span>重点</span></div>
          <div class="tool on"><svg class="ic"><use href="#mid"/></svg><span>中点</span></div>
        </div>
        <div class="tool"><svg class="ic"><use href="#vtx"/></svg><span>顶点</span></div>
        <div class="tool"><svg class="ic"><use href="#coord"/></svg><span>坐标</span></div>
      </div>
      <div class="group bb3">
        <i class="grip"></i>
        <div class="tcombo offset"><span>不偏移</span><b class="dd"></b></div>
        <i class="sep"></i>
        <span class="dimmed">X=</span><div class="spin"><span>0</span><u></u></div><span class="dimmed">mm</span>
        <span class="dimmed y">Y=</span><div class="spin"><span>0</span><u></u></div><span class="dimmed">mm</span>
        <i class="sep"></i><i class="cb"></i><span class="rotlabel">旋转</span>
        <div class="spin wide3"><span>0.000</span><u></u></div><span class="dimmed">°</span>
      </div>
    </div>
  </section>
</div>

<div class="status">
  <div class="cell s1"><i class="m">X=63636 Y=7315</i></div>
  <div class="cell s2">层高<i class="m">:3.55m</i></div>
  <div class="cell s3">底标高<i class="m">:-3.58m</i></div>
  <div class="cell s4"><i class="m">0</i></div>
  <div class="cell s5">按鼠标左键选择需要布筋的板，按右键或<i class="m">ESC</i>取消</div>
</div>

<div class="taskbar">
  <div class="start"><svg viewBox="0 0 16 16"><path d="M0 2.500 6.800 1.500v6H0zM7.800 1.400 16 0v7.500H7.800zM0 8.500h6.800v6L0 13.500zM7.800 8.500H16V16l-8.200-1.400z" fill="#fff"/></svg></div>
  <div class="search">
    <i class="ring"></i><span>在这里输入你要搜索的内容</span>
    <svg viewBox="0 0 16 16"><rect x="5" y="1" width="6" height="10" rx="3" fill="none" stroke="#999"/><path d="M3 8q0 5 5 5t5-5M8 13v2M5 15.500h6" fill="none" stroke="#999"/></svg>
  </div>
  <div class="apps">
    <div class="app"><svg viewBox="0 0 24 24"><path d="M12 11C5 12 2 9 2 6s4-5 7-3 3 5 3 8zM13 12c-1-7 2-10 5-10s5 4 3 7-5 3-8 3zM12 13c7-1 10 2 10 5s-4 5-7 3-3-5-3-8zM11 12c1 7-2 10-5 10s-5-4-3-7 5-3 8-3z" fill="#d5dbe0"/></svg></div>
    <div class="app"><svg viewBox="0 0 24 24"><circle cx="10" cy="13" r="8" fill="none" stroke="#ccc" stroke-width="1.800"/><circle cx="11" cy="13" r="4.500" fill="none" stroke="#ccc" stroke-width="1.500"/><path d="M18 1c2 0 3 2 3 4l2 3H13l2-3c0-2 1-4 3-4z" fill="#eab020"/><circle cx="18" cy="10" r="1.500" fill="#eab020"/></svg></div>
    <i class="tsep"></i>
    <div class="app ul-none"><svg viewBox="0 0 24 24"><path d="M2 13C2 6 7 2 13 2c6 0 10 4 10 10v2H8c0 5 8 6 13 3v5c-7 3-15 1-17-4 1-3 3-5 5-6H17c0-4-6-5-9-1-3 1-5 2-6 2z" fill="#1b7bd6"/></svg></div>
    <div class="app"><svg viewBox="0 0 24 24"><path d="M3 7h18v16H3z" fill="#fff"/><path d="M8 7V4a4 4 0 0 1 8 0v3" fill="none" stroke="#fff" stroke-width="1.500"/><path d="M8 11h3.500v3.500H8zM12.500 11H16v3.500h-3.500zM8 15.500h3.500V19H8zM12.500 15.500H16V19h-3.500z" fill="#111"/></svg></div>
    <div class="app u"><svg viewBox="0 0 24 24"><path d="M2 3h8l2 3h10v16H2z" fill="#f1d36e"/><path d="M2 8h20v4H2z" fill="#e9bf4b"/><path d="M8 22v-7l4-3 4 3v7z" fill="#3ba7e0"/></svg></div>
    <div class="app u"><svg viewBox="0 0 24 24"><path d="M20 3C12-1 3 5 4 13c1 7 9 10 14 6 3-3 2-8-3-8H10c3-4 7-5 10-8z" fill="#2a86c8"/><path d="M4 18c3-3 7-3 9 0l-3 4z" fill="#e65a70"/></svg></div>
    <div class="app u"><svg viewBox="0 0 24 24"><circle cx="12" cy="12" r="10" fill="#b8e58a"/><circle cx="12" cy="12" r="7" fill="#fff"/><path d="M6 12h12M8 9h8M8 15h8" stroke="#57b02a" stroke-width="1.500"/><path d="M12 2q7-3 9 0" fill="none" stroke="#3a9a2a" stroke-width="1.500"/></svg></div>
    <div class="app active u"><svg viewBox="0 0 24 24"><rect width="24" height="24" rx="4" fill="#1e90e8"/><path d="M12 4v16M6 9v3a3 3 0 0 0 3 3h6a3 3 0 0 0 3-3V9" fill="none" stroke="#fff" stroke-width="2"/></svg></div>
    <div class="app u"><svg viewBox="0 0 24 24"><rect x="1" y="1" width="22" height="22" rx="2" fill="#f4a820"/><path d="M4 6h14v14H4z" fill="#fbe4b0"/><path d="M6 10l8 1M6 13l8 1M6 16l7 1" stroke="#a06820"/><path d="M12 14 20 2l2 1-8 13z" fill="#b23a20"/></svg></div>
  </div>
  <div class="tray">
    <div class="cpu"><span>65%</span><span>CPU使用</span></div>
    <div class="tr"><svg viewBox="0 0 16 16"><path d="M2 11l6-6 6 6" fill="none" stroke="#fff"/></svg></div>
    <div class="tr"><svg viewBox="0 0 16 16"><rect x="3" y="4" width="12" height="9" fill="none" stroke="#fff"/><rect x="5" y="6" width="8" height="5" fill="#ddd"/><path d="M0 3h3M1.500 2v4" stroke="#fff"/></svg></div>
    <div class="tr"><svg viewBox="0 0 16 16"><path d="M2 13a11 11 0 0 1 11-11M5 13a8 8 0 0 1 8-8M8 13a5 5 0 0 1 5-5" fill="none" stroke="#aaa"/><circle cx="12" cy="13" r="1.400" fill="#fff"/></svg></div>
    <div class="tr"><svg viewBox="0 0 16 16"><path d="M1 6h3l4-4v12l-4-4H1z" fill="none" stroke="#fff"/><path d="M10 5q2 3 0 6M12 3q3 5 0 10" fill="none" stroke="#bbb"/></svg></div>
    <div class="tr zh">中</div>
    <div class="tr"><svg viewBox="0 0 16 16"><path d="M2 3l12-2 1 12-12 2z" fill="#ef4d1c"/><path d="M11 4H6v3.500h4V11H5" fill="none" stroke="#fff" stroke-width="1.700"/></svg></div>
    <div class="clock"><span>10:20</span><span>2017/8/11</span></div>
    <div class="notif"><svg viewBox="0 0 16 16"><path d="M1 1h14v11H6l-2 3v-3H1z" fill="#fff"/><path d="M3 4h10M3 6.500h10M3 9h10" stroke="#222"/></svg><b class="badge">7</b></div>
  </div>
</div>

<aside class="widget">
  <div class="ball">75%</div>
  <div class="pill">
    <div class="updown"><i class="up">↑</i><i class="down">↓</i></div>
    <div class="rates"><span>0K/s</span><span>0K/s</span></div>
    <div class="plus">+<i></i></div>
  </div>
</aside>

<div class="dialog">
  <div class="dlghead">
    <svg viewBox="0 0 16 16"><rect width="16" height="16" rx="3" fill="#1e90e8"/><path d="M8 3v10M4 6v2a2 2 0 0 0 2 2h4a2 2 0 0 0 2-2V6" fill="none" stroke="#fff" stroke-width="1.500"/></svg>
    <span>智能布置</span>
    <svg class="dlgx" viewBox="0 0 12 12"><path d="M1 1l10 10M11 1 1 11" stroke="#111" stroke-width="1.100"/></svg>
  </div>
  <div class="dlgbody">
    <fieldset class="fsleft">
      <legend>布置方式选择</legend>
      <div class="radio"><i class="rd chk"></i><span>双向布置</span></div>
      <div class="radio"><i class="rd"></i><span>双网双向布置</span></div>
      <div class="radio"><i class="rd"></i><span><i class="m">XY</i>向布置</span></div>
    </fieldset>
    <div class="dlgright">
      <div class="sets">
        <fieldset><legend>底筋</legend><div class="dcombo"><span class="selected m">SLJ-1(C12@200)</span><svg viewBox="0 0 12 12"><path d="M2 4l4 4 4-4" fill="none" stroke="#555"/></svg></div></fieldset>
        <fieldset><legend>面筋</legend><div class="dcombo"><svg viewBox="0 0 12 12"><path d="M2 4l4 4 4-4" fill="none" stroke="#555"/></svg></div></fieldset>
        <fieldset><legend>温度筋</legend><div class="dcombo"><svg viewBox="0 0 12 12"><path d="M2 4l4 4 4-4" fill="none" stroke="#555"/></svg></div></fieldset>
        <fieldset><legend>中间层筋</legend><div class="dcombo"><svg viewBox="0 0 12 12"><path d="M2 4l4 4 4-4" fill="none" stroke="#555"/></svg></div></fieldset>
      </div>
      <div class="refrow">
        <svg class="check" viewBox="0 0 13 13"><rect x=".5" y=".5" width="12" height="12" fill="#fff" stroke="#333"/><path d="M3 6.500l2.500 3L10 3.500" fill="none" stroke="#333" stroke-width="1.200"/></svg>
        <span class="reflabel">选择参照轴网</span>
        <div class="gcombo"><span>轴网<i class="m">-1</i></span><svg viewBox="0 0 12 12"><path d="M2 4l4 4 4-4" fill="none" stroke="#555"/></svg></div>
      </div>
      <div class="btns"><div class="btn ok">确定</div><div class="btn no">取消</div></div>
    </div>
  </div>
</div>

<svg class="mark" viewBox="0 0 260 110" xmlns="http://www.w3.org/2000/svg"><ellipse cx="128" cy="52" rx="121" ry="45.500" fill="none" stroke="#f00" stroke-width="7"/></svg>

<aside class="ime">
  <svg class="imeS" viewBox="0 0 26 26"><path d="M3 4 23 1l3 20-21 4z" fill="#f4511e"/><path d="M19 7H9v5.500h8V18H7" fill="none" stroke="#fff" stroke-width="3.200"/></svg>
  <div class="imebar">
    <span class="imezh">英</span><span class="imep">•,</span>
    <svg viewBox="0 0 16 16"><rect x="5.500" y="0" width="5" height="10" rx="2.500" fill="#1a74c4"/><path d="M3 7q0 5 5 5t5-5M8 12v3M5 15.500h6" fill="none" stroke="#1a74c4" stroke-width="1.300"/></svg>
    <svg viewBox="0 0 16 16"><rect y="2" width="16" height="12" rx="1" fill="#1a74c4"/><path d="M2 5h12M2 8h12M4 11h8" stroke="#fff" stroke-dasharray="1.500 1"/></svg>
    <svg viewBox="0 0 16 16"><circle cx="7" cy="4" r="3" fill="#b4bcc4"/><path d="M2 15q0-7 5-7t5 7z" fill="#b4bcc4"/><rect x="8" y="10" width="8" height="6" fill="#9aa4ae"/></svg>
    <svg viewBox="0 0 16 16"><path d="M5 1h6l4 3-2 3-2-1v9H5V6L3 7 1 4z" fill="#1a74c4"/></svg>
    <svg viewBox="0 0 16 16"><path d="M15 3l-3 3-2-2 3-3c-3-1-6 2-5 5l-7 7 2 2 7-7c3 1 6-2 5-5z" fill="#1a74c4"/></svg>
  </div>
</aside>
</body>
</html>
```
FILE: styles.css
```css
*{box-sizing:border-box}
html,body{margin:0;padding:0}
body{width:1366px;height:768px;overflow:hidden;background:#f0f0f0;color:#111;font:12px/16px "Noto Sans CJK SC","Liberation Sans",sans-serif;display:flex;flex-direction:column;position:relative}
i,em,b,u{font-style:normal;text-decoration:none;font-weight:normal}
.sprite{display:block;width:0;height:0;flex:none}
.m{font-family:"Liberation Mono",monospace;letter-spacing:-1.2px}

.title{height:23px;flex:none;background:#fff;display:flex;align-items:center;padding-left:3px;color:#808080;font-size:12.6px;white-space:nowrap}
.logo{width:16px;height:16px;flex:none;margin-right:4px}
.title-a{width:201px}
.winbtns{margin-left:auto;display:flex;gap:35px;padding-right:12px}
.winbtns svg{width:16px;height:16px}

.menubar{height:30px;flex:none;display:flex;align-items:center;background:#f3f3f3;padding-left:7px;white-space:nowrap}
.menus{display:flex;gap:10.5px;width:773px;flex:none;overflow:hidden}
.menus span:nth-child(3){width:44px}
.menus span:nth-child(12){margin-left:3px}
.m-new{margin-left:8px;width:86px}
.m-gx{width:63px}
.tip{width:187px;height:29px;display:flex;align-items:center;justify-content:center;background:#f8f8f8;color:#4a2a00;border-radius:2px;padding-right:4px}
.account{flex:1;display:flex;align-items:center;height:29px;margin-left:1px;padding-left:5px;background:#f8f8f8;gap:4px}
.account .dd{margin-left:5px;margin-right:4px}
.bean{margin-left:1px}
.bellic{margin-left:6px}
.account .more{margin-left:auto;margin-right:5px}
.more{font-size:13px;line-height:12px;font-weight:bold;color:#111;align-self:flex-start;margin-top:3px}

.ic{width:16px;height:16px;flex:none;display:block}
.tool{display:flex;align-items:center;gap:4px;white-space:nowrap;flex:none}
.tools{display:flex;align-items:center;gap:7.5px}
.off{color:#a0a0a0}
.off .ic{opacity:.75}
.dd{display:block;flex:none;width:0;height:0;border:3px solid transparent;border-top:4px solid #111;border-bottom:0;margin:0 1px}
.tool .dd{margin-left:1px;margin-right:1px}
.tool .dd.tight{margin-left:0;margin-right:-2px}
.dd.solo{margin:0}
.sep{display:block;flex:none;width:1px;height:20px;background:#c4c4c4;margin:0 -2px}
.grip{display:block;flex:none;width:3px;height:18px;background-image:radial-gradient(circle,#a8a8a8 1px,transparent 1.200px);background-size:3px 4px}
.group{background:#f7f7f7;height:100%}
.sigma{width:16px;text-align:center;font:bold 14px/16px "Liberation Serif",serif;flex:none}

.toolrow{height:31px;flex:none;display:flex;padding-top:1px;padding-bottom:3px;white-space:nowrap}
.g1{width:148px;display:flex;align-items:center;padding-left:4px;gap:8px}
.g1 .dd{margin:0 -1px}
.g1 .sep{margin:0 -1px 0 -2px}
.g1 .more{margin-left:18px}
.g2{width:554px;padding-left:8px;margin-right:1px}
.g2-more{margin-left:auto;margin-right:5px}
.g3{flex:1;padding-left:0}
.tool.lit{background:#fff;height:27px;padding:0 3px;margin-right:-7px;width:51px}
.ddlit{margin-left:3px!important;margin-right:0!important}
.more.end{margin-left:auto;margin-right:5px}

.main{height:623px;flex:none;display:flex;align-items:stretch}
.nav{width:230px;flex:none;display:flex;flex-direction:column}
.navhead{height:15px;flex:none;margin:0 1px 2px 0;border:1px solid #9a9a9a;background:#f2f2f2;display:flex;justify-content:space-between;align-items:center;padding:0 3px 0 1px;line-height:13px;letter-spacing:.2px}
.navbtns{display:flex;gap:7px}
.navbtns svg{width:12px;height:12px}
.navbtn{height:22px;flex:none;margin:0 1px;border:1px solid #a0a0a0;border-bottom-color:#888;background:#f2f2f2;display:flex;align-items:center;justify-content:center}
.treebox{height:514px;flex:none;margin:1px 2px 0;border:1px solid #a0a0a0;background:#fff;display:flex;flex-direction:column;overflow:hidden}
.treetools{height:28px;flex:none;display:flex;align-items:center;gap:7px;padding-left:3px}
.treetools svg{width:17px;height:17px}
.treewrap{flex:1;display:flex;min-height:0}
.tree{width:207px;flex:none;overflow:hidden;background:repeating-linear-gradient(to bottom,#8a8a8a 0 1px,transparent 1px 3px) 12px 0/1px 100% no-repeat}
.row{height:16px;display:flex;align-items:center;white-space:nowrap}
.row span{margin-bottom:2px}
.row.c{padding-left:43px;gap:4px;background:repeating-linear-gradient(to bottom,#8a8a8a 0 1px,transparent 1px 3px) 32px 0/1px 16px no-repeat,repeating-linear-gradient(to right,#8a8a8a 0 1px,transparent 1px 3px) 32px 8px/11px 1px no-repeat}
.row.f{padding-left:4px;background:repeating-linear-gradient(to right,#8a8a8a 0 1px,transparent 1px 3px) 18px 8px/5px 1px no-repeat}
.chev{width:12px;height:12px;background:#fff;flex:none;margin-right:7px}
.row.f .ic{margin-right:6px}
.row.sel span{background:#d9d9d9;padding:0 5px 2px;margin:0 0 0 -5px;height:16px;width:75px;line-height:14px}
.scroll{width:16px;flex:none;display:flex;flex-direction:column;background:#f0f0f0}
.scroll svg{width:16px;height:16px;flex:none;margin:0 0 4px}
.scroll svg:last-child{margin:0 0 1px}
.track{flex:1;padding-top:39px;min-height:0}
.thumb{height:265px;background:#cdcdcd}

.work{flex:1;margin-left:4px;min-width:0;display:flex;flex-direction:column}
.rows{flex:none;display:flex;white-space:nowrap}
.r2{height:27px;padding-bottom:2px}
.r2 .group{padding-left:2px;padding-right:5px}
.r2 .grip{margin-right:-1.500px}
.r3{height:29px;padding-bottom:3px}
.r3 .group{padding-left:2px;padding-right:4px}
.r3 .grip{margin-right:-3.500px}
.r3 .g-axis{margin-left:3px;gap:7px}
.r3 .g-axis .grip{margin-left:1px;margin-right:-2px}
.combos{display:flex;gap:3px}
.tcombo{width:69px;height:25px;background:#fff;display:flex;align-items:center;padding-left:2px;justify-content:space-between;padding-right:4px}
.tcombo.first{width:57px}
.tcombo .dd{margin:0}
.r4{height:28px;padding-bottom:1px}
.wide{flex:1;padding-left:3px}
.wide .grip{margin-right:-1.500px}
.r4 .tool.on{height:23px}
.on{border:1px solid #1e7ecf;background:#e5f1fb;padding:0 2px 0 3px}
.b-one{width:50px;margin-left:2px;margin-right:-3px}
.b-xy{margin-left:-4px;margin-right:-3px;width:66px}
.blank{width:55px;height:21px;border:1px solid #8a8a8a;background:#f0f0f0;display:flex;align-items:center;justify-content:flex-end;padding-right:4px;margin-right:-1.500px}
.r4-more{margin-left:auto;margin-right:4px}
.griptail{width:34px;height:27px;background:#f8f8f8;display:flex;align-items:center;margin-left:3px}
.griptail .grip{height:20px;margin:0}

.canvas{display:block;width:1132px;height:507px;flex:none}
.axlabel text{font:15px "Liberation Sans",sans-serif;fill:#c4c4c4}
.dim text{font:15.5px "Liberation Sans",sans-serif;fill:#b4b4b4}

.bottombar{flex:1;display:flex;gap:2px;padding:2px 0 5px;white-space:nowrap}
.bb1{padding-left:2px;padding-right:4px;width:210px}
.bb2{padding-left:3px;padding-right:4px;width:263px}
.bb3{flex:1;display:flex;align-items:center;padding-left:3px;gap:3px;margin-right:247px;color:#666}
.bb1.tools,.bb2.tools{gap:6px}
.bb2 .grip{margin-right:-2px}
.bottombar .tool.on{height:24px;background:#dfeefb}
.b-snap{width:76px;margin-left:-2px;margin-right:-4px}
.pair{display:flex}
.pair .tool{width:50px;padding-left:1px}
.pair + .tool{margin-left:-2px}
.tcombo.offset{width:58px;height:24px;margin-left:-1px;padding-left:2px;color:#111}
.bb3 .sep{margin:0 0 0 1px}
.dimmed{color:#777;flex:none}
.dimmed.y{margin-left:2px}
.spin{width:58px;height:21px;border:1px solid #a8a8a8;background:#efefef;display:flex;align-items:center;justify-content:flex-end;padding-right:1px;gap:4px;margin:0 -1px}
.spin u{display:block;width:9px;height:17px;background:linear-gradient(#777,#777) 2px 4px/5px 1px no-repeat,linear-gradient(#777,#777) 2px 12px/5px 1px no-repeat}
.spin.wide3{width:66px;margin:0 -1px 0 1px}
.cb{display:block;width:11px;height:11px;background:#fff;border:1px solid #888;margin:0 4px 0 1px}
.rotlabel{color:#111;margin-right:3px}

.status{height:22px;flex:none;display:flex;gap:2px;padding:1px 0 2px 1px;white-space:nowrap}
.cell{border:1px solid #dcdcdc;background:#f2f2f2;padding-left:2px;line-height:17px}
.s1{width:147px}.s2{width:78px}.s3{width:98px}.s4{width:48px}.s5{flex:1}

.taskbar{height:40px;flex:none;background:#04111c;display:flex;color:#fff}
.start{width:48px;background:#000;display:flex;align-items:center;justify-content:center}
.start svg{width:16px;height:16px}
.search{width:343px;background:#333;display:flex;align-items:center;padding-left:10px;color:#9b9b9b;font-size:13px}
.ring{display:block;width:21px;height:21px;border:3px solid #ddd;border-radius:50%;margin-right:5px}
.search svg{width:16px;height:20px;margin-left:auto;margin-right:12px}
.apps{display:flex;margin-left:4px}
.app{width:48.700px;height:40px;display:flex;align-items:center;justify-content:center;border-bottom:2px solid transparent}
.app svg{width:24px;height:24px}
.app.u{border-bottom-color:#66aaf0}
.active{background:#2c3a45}
.tsep{display:block;width:1px;height:22px;background:#3a4650;margin:9px 13.500px 0 10px}
.tray{margin-left:auto;display:flex;align-items:center}
.cpu{width:60px;display:flex;flex-direction:column;align-items:center;line-height:16px;margin:0 8px 4px 0}
.tr{width:24px;display:flex;justify-content:center;align-items:center}
.tr svg{width:16px;height:16px}
.zh{font-size:14px}
.clock{width:76px;display:flex;flex-direction:column;align-items:center;line-height:16px;margin-bottom:4px}
.notif{width:60px;display:flex;justify-content:center;position:relative}
.notif svg{width:17px;height:17px;margin-left:-4px}
.badge{position:absolute;left:27px;top:7px;width:17px;height:17px;border-radius:50%;background:#333;border:1px solid #bbb;font-size:13px;line-height:15px;text-align:center;color:#fff;font-weight:bold}

.widget{position:absolute;left:101px;top:1px;width:128px;height:46px;display:flex;align-items:center}
.ball{width:46px;height:46px;flex:none;border-radius:50%;background:linear-gradient(#0c6e3c,#36b45f 55%,#118a3f);border:3px solid #d8d8d8;box-shadow:0 1px 2px #666;display:flex;align-items:center;justify-content:center;color:#fff;font-size:14px;position:relative;z-index:1}
.pill{flex:1;height:38px;margin-left:-22px;padding-left:27px;border-radius:0 19px 19px 0;background:linear-gradient(#dcdcdc,#f4f4f4 50%,#cfcfcf);box-shadow:0 1px 2px #888;display:flex;align-items:center;color:#222;font-size:10px}
.updown{display:flex;flex-direction:column;line-height:15px;font-size:10px;font-weight:bold;width:28px}
.up{color:#e0553a}.down{color:#2a9a45}
.rates{display:flex;flex-direction:column;line-height:15px;width:24px}
.plus{width:17px;height:17px;border-radius:50%;background:#3a80d8;color:#fff;font-size:16px;font-weight:bold;line-height:16px;text-align:center;position:relative}
.plus i{position:absolute;right:-2px;top:-3px;width:8px;height:8px;border-radius:50%;background:#d8232a}

.dialog{position:absolute;left:477px;top:198px;width:413px;height:371px;border:1px solid #4a90d8;background:#f0f0f0;display:flex;flex-direction:column}
.dlghead{height:24px;flex:none;background:#fff;display:flex;align-items:center;padding-left:3px;gap:5px}
.dlghead svg{width:16px;height:16px}
.dlghead svg.dlgx{width:12px;height:12px;margin-left:auto;margin-right:9px}
.dlgbody{flex:1;display:flex;gap:5px;padding:15px 0 0 13px}
fieldset{margin:0;padding:0;border:1px solid #dcdcdc;min-width:0}
legend{padding:0;line-height:16px;background:#f0f0f0}
.fsleft{width:121px;height:281px;padding:35px 0 0 7px;display:flex;flex-direction:column;gap:72px}
.radio{height:16px;display:flex;align-items:center;gap:3px}
.rd{display:block;width:13px;height:13px;border:1px solid #333;border-radius:50%;background:#fff}
.rd.chk{background:radial-gradient(circle,#333 3.500px,#fff 4px)}
.dlgright{width:253px;flex:none;display:flex;flex-direction:column}
.sets{display:flex;flex-direction:column;gap:6px;margin-left:12px;width:233px}
.sets fieldset{height:49px;padding:4px 0 0 43px}
.sets legend{margin-left:-36px}
.dcombo{width:173px;height:20px;background:#fff;border:1px solid #7a7a7a;display:flex;align-items:center;padding-left:1px;padding-right:2px}
.dcombo svg,.gcombo svg{width:12px;height:12px;flex:none;margin-left:auto}
.selected{background:#0078d7;color:#fff;line-height:14px;height:15px;padding-left:1px;padding-right:2px;margin-top:-2px}
.refrow{display:flex;align-items:center;margin-top:40px;height:20px}
.check{width:13px;height:13px;flex:none;margin-right:3px}
.reflabel{flex:none;white-space:nowrap}
.gcombo{width:144px;height:20px;flex:none;margin-left:21px;background:#e1e1e1;border:1px solid #adadad;display:flex;align-items:center;padding:0 2px 0 3px}
.btns{display:flex;justify-content:flex-end;gap:21px;margin-top:18px;padding-right:1px}
.btn{height:28px;background:#e1e1e1;border:1px solid #adadad;display:flex;align-items:center;justify-content:center}
.ok{width:72px}.no{width:78px}

.mark{position:absolute;left:580px;top:200px;width:260px;height:110px}

.ime{position:absolute;left:1182px;top:702px;width:184px;height:26px;display:flex;align-items:center}
.imeS{width:26px;height:26px;flex:none;position:relative;z-index:1}
.imebar{flex:1;height:20px;background:#fff;margin-left:-3px;padding-left:11px;display:flex;align-items:center;gap:6px;color:#1a74c4}
.imebar svg{width:16px;height:16px;flex:none}
.imezh{font-size:14px;font-weight:bold;width:16px}
.imep{width:16px;font-weight:bold;text-align:center}
```
